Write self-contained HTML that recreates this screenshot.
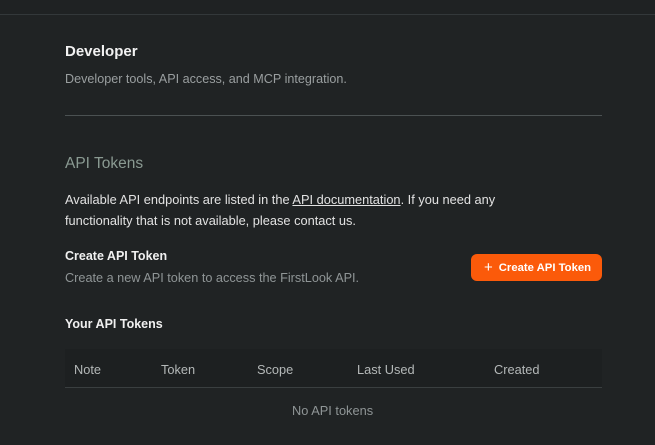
<!DOCTYPE html>
<html><head><style>
*{margin:0;padding:0;box-sizing:border-box}
body{width:655px;height:445px;background:#202324;font-family:"Liberation Sans",sans-serif;position:relative;overflow:hidden;color:#e8e8e8}
.top{position:absolute;left:0;top:0;width:655px;height:15px;border-bottom:1px solid #33383a;background:#1f2223}
.a{position:absolute;white-space:nowrap}
</style></head><body>
<div class="top"></div>
<div class="a" style="left:65px;top:43px;font-size:15px;font-weight:bold;color:#f2f2f2">Developer</div>
<div class="a" style="left:65px;top:72px;font-size:12.6px;color:#9a9fa0">Developer tools, API access, and MCP integration.</div>
<div class="a" style="left:65px;top:115px;width:537px;height:1px;background:#4b5152"></div>
<div class="a" style="left:65px;top:155px;font-size:15.5px;color:#8a9a92">API Tokens</div>
<div class="a" style="left:65px;top:189px;font-size:12.8px;color:#e2e2e2;line-height:21px">Available API endpoints are listed in the <span style="text-decoration:underline">API documentation</span>. If you need any<br>functionality that is not available, please contact us.</div>
<div class="a" style="left:65px;top:249px;font-size:12.5px;font-weight:bold;color:#f0f0f0">Create API Token</div>
<div class="a" style="left:65px;top:271px;font-size:12.7px;color:#8f9596">Create a new API token to access the FirstLook API.</div>
<div class="a" style="left:471px;top:254px;width:131px;height:27px;background:#fb5a0a;border-radius:6px;color:#fff;font-size:11.3px;font-weight:bold;line-height:27px;padding-left:13px"><span style="font-weight:normal;font-size:15px;vertical-align:-1px;margin-right:6px">+</span>Create API Token</div>
<div class="a" style="left:65px;top:317px;font-size:12.5px;font-weight:bold;color:#f0f0f0">Your API Tokens</div>
<div class="a" style="left:65px;top:349px;width:537px;height:39px;background:#1d2021;border-bottom:1px solid #3a3f40"></div>
<div class="a" style="left:74px;top:362px;font-size:12.8px;color:#b4b8b8">Note</div>
<div class="a" style="left:161px;top:362px;font-size:12.8px;color:#b4b8b8">Token</div>
<div class="a" style="left:257px;top:362px;font-size:12.8px;color:#b4b8b8">Scope</div>
<div class="a" style="left:357px;top:362px;font-size:12.8px;color:#b4b8b8">Last Used</div>
<div class="a" style="left:494px;top:362px;font-size:12.8px;color:#b4b8b8">Created</div>
<div class="a" style="left:292px;top:403px;font-size:12.8px;color:#8f9596">No API tokens</div>
</body></html>
